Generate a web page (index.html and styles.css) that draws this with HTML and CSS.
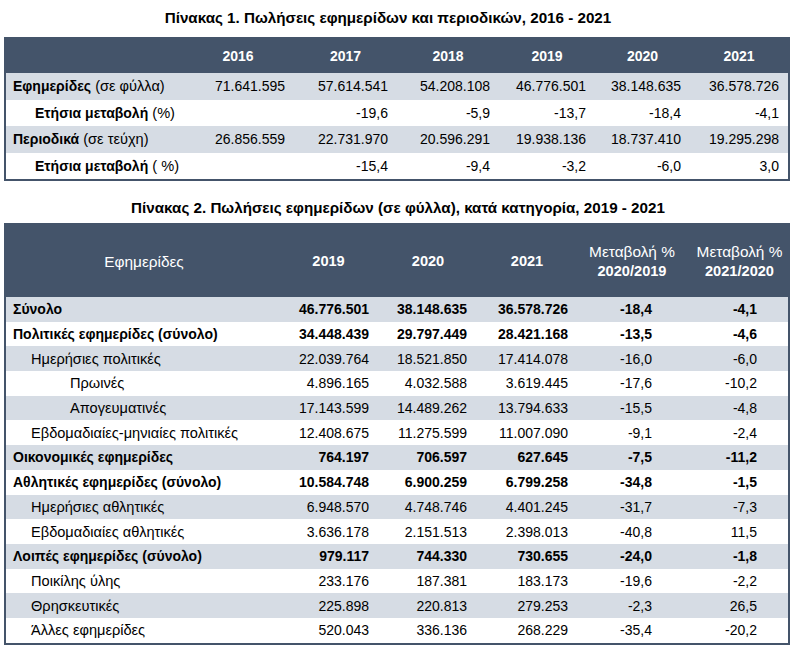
FILE: index.html
```html
<!DOCTYPE html>
<html>
<head>
    <link rel="stylesheet" href="styles.css">
</head>
<body>
    <h2 class="title title-first">Πίνακας 1. Πωλήσεις εφημερίδων και περιοδικών, 2016 - 2021</h2>
    <table class="data-table sales">
        <colgroup>
            <col style="width: 176px">
            <col style="width: 112px">
            <col style="width: 103px">
            <col style="width: 102px">
            <col style="width: 96px">
            <col style="width: 95px">
            <col style="width: 98px">
        </colgroup>
        <thead>
            <tr>
                <th></th>
                <th>2016</th>
                <th>2017</th>
                <th>2018</th>
                <th>2019</th>
                <th>2020</th>
                <th>2021</th>
            </tr>
        </thead>
        <tbody>
            <tr>
                <td class="label"><b>Εφημερίδες</b> (σε φύλλα)</td>
                <td>71.641.595</td>
                <td>57.614.541</td>
                <td>54.208.108</td>
                <td>46.776.501</td>
                <td>38.148.635</td>
                <td>36.578.726</td>
            </tr>
            <tr>
                <td class="label indent"><b>Ετήσια μεταβολή</b> (%)</td>
                <td></td>
                <td>-19,6</td>
                <td>-5,9</td>
                <td>-13,7</td>
                <td>-18,4</td>
                <td>-4,1</td>
            </tr>
            <tr>
                <td class="label"><b>Περιοδικά</b> (σε τεύχη)</td>
                <td>26.856.559</td>
                <td>22.731.970</td>
                <td>20.596.291</td>
                <td>19.938.136</td>
                <td>18.737.410</td>
                <td>19.295.298</td>
            </tr>
            <tr>
                <td class="label indent"><b>Ετήσια μεταβολή</b> ( %)</td>
                <td></td>
                <td>-15,4</td>
                <td>-9,4</td>
                <td>-3,2</td>
                <td>-6,0</td>
                <td>3,0</td>
            </tr>
        </tbody>
    </table>

    <h2 class="title title-second">Πίνακας 2. Πωλήσεις εφημερίδων (σε φύλλα), κατά κατηγορία, 2019 - 2021</h2>
    <table class="data-table categories">
        <colgroup>
            <col style="width: 276px">
            <col style="width: 93px">
            <col style="width: 106px">
            <col style="width: 92px">
            <col style="width: 118px">
            <col style="width: 97px">
        </colgroup>
        <thead>
            <tr>
                <th class="plain">Εφημερίδες</th>
                <th>2019</th>
                <th>2020</th>
                <th>2021</th>
                <th><span class="plain">Μεταβολή %</span><br>2020/2019</th>
                <th><span class="plain">Μεταβολή %</span><br>2021/2020</th>
            </tr>
        </thead>
        <tbody>
            <tr class="total">
                <td class="label">Σύνολο</td>
                <td>46.776.501</td><td>38.148.635</td><td>36.578.726</td><td>-18,4</td><td>-4,1</td>
            </tr>
            <tr class="total">
                <td class="label">Πολιτικές εφημερίδες (σύνολο)</td>
                <td>34.448.439</td><td>29.797.449</td><td>28.421.168</td><td>-13,5</td><td>-4,6</td>
            </tr>
            <tr>
                <td class="label level-1">Ημερήσιες πολιτικές</td>
                <td>22.039.764</td><td>18.521.850</td><td>17.414.078</td><td>-16,0</td><td>-6,0</td>
            </tr>
            <tr>
                <td class="label level-2">Πρωινές</td>
                <td>4.896.165</td><td>4.032.588</td><td>3.619.445</td><td>-17,6</td><td>-10,2</td>
            </tr>
            <tr>
                <td class="label level-2">Απογευματινές</td>
                <td>17.143.599</td><td>14.489.262</td><td>13.794.633</td><td>-15,5</td><td>-4,8</td>
            </tr>
            <tr>
                <td class="label level-1">Εβδομαδιαίες-μηνιαίες πολιτικές</td>
                <td>12.408.675</td><td>11.275.599</td><td>11.007.090</td><td>-9,1</td><td>-2,4</td>
            </tr>
            <tr class="total">
                <td class="label">Οικονομικές εφημερίδες</td>
                <td>764.197</td><td>706.597</td><td>627.645</td><td>-7,5</td><td>-11,2</td>
            </tr>
            <tr class="total">
                <td class="label">Αθλητικές εφημερίδες (σύνολο)</td>
                <td>10.584.748</td><td>6.900.259</td><td>6.799.258</td><td>-34,8</td><td>-1,5</td>
            </tr>
            <tr>
                <td class="label level-1">Ημερήσιες αθλητικές</td>
                <td>6.948.570</td><td>4.748.746</td><td>4.401.245</td><td>-31,7</td><td>-7,3</td>
            </tr>
            <tr>
                <td class="label level-1">Εβδομαδιαίες αθλητικές</td>
                <td>3.636.178</td><td>2.151.513</td><td>2.398.013</td><td>-40,8</td><td>11,5</td>
            </tr>
            <tr class="total">
                <td class="label">Λοιπές εφημερίδες (σύνολο)</td>
                <td>979.117</td><td>744.330</td><td>730.655</td><td>-24,0</td><td>-1,8</td>
            </tr>
            <tr>
                <td class="label level-1">Ποικίλης ύλης</td>
                <td>233.176</td><td>187.381</td><td>183.173</td><td>-19,6</td><td>-2,2</td>
            </tr>
            <tr>
                <td class="label level-1">Θρησκευτικές</td>
                <td>225.898</td><td>220.813</td><td>279.253</td><td>-2,3</td><td>26,5</td>
            </tr>
            <tr>
                <td class="label level-1">Άλλες εφημερίδες</td>
                <td>520.043</td><td>336.136</td><td>268.229</td><td>-35,4</td><td>-20,2</td>
            </tr>
        </tbody>
    </table>
</body>
</html>
```

FILE: styles.css
```css
body {
    font-family: "Liberation Sans", Arial, sans-serif;
    font-size: 14px;
    color: #000;
    background: #fff;
    margin: 0;
    padding: 0 4px;
}
.title {
    margin: 0;
    font-size: 15.2px;
    font-weight: bold;
    text-align: center;
    color: #000;
}
.title-first {
    height: 37px;
    line-height: 35px;
    padding-right: 20px;
    box-sizing: border-box;
}
.title-second {
    height: 42px;
    padding-top: 12px;
    line-height: 30px;
    box-sizing: border-box;
}
.data-table {
    width: 786px;
    table-layout: fixed;
    border-collapse: separate;
    border-spacing: 0;
    border: 2px solid #44546a;
}
.data-table th {
    background: #44546a;
    color: #fff;
    font-weight: bold;
    text-align: center;
    padding: 0;
}
.data-table td {
    padding: 0 9px 0 0;
    text-align: right;
    white-space: nowrap;
}
.data-table tbody tr:nth-child(odd) td {
    background: #d6dce4;
}
.data-table td.label {
    text-align: left;
    padding-left: 7px;
    font-size: 14.6px;
}
.data-table td.label b {
    font-size: 14px;
}
.sales th {
    height: 34px;
}
.sales td {
    height: 26.5px;
}
.sales td.indent {
    padding-left: 29px;
}
.categories th {
    height: 72px;
    line-height: 19px;
    font-size: 14.6px;
}
.categories th .plain,
.categories th.plain {
    font-weight: normal;
    font-size: 15.4px;
}
.categories td {
    height: 24.7px;
}
.categories td:nth-child(2) { padding-right: 6px; }
.categories td:nth-child(3) { padding-right: 14px; }
.categories td:nth-child(4) { padding-right: 5px; }
.categories td:nth-child(5) { padding-right: 39px; }
.categories td:nth-child(6) { padding-right: 31px; }
.categories tr.total td {
    font-weight: bold;
}
.categories tr.total td.label {
    font-size: 14px;
}
.categories td.level-1 {
    padding-left: 25px;
}
.categories td.level-2 {
    padding-left: 64px;
}
```
